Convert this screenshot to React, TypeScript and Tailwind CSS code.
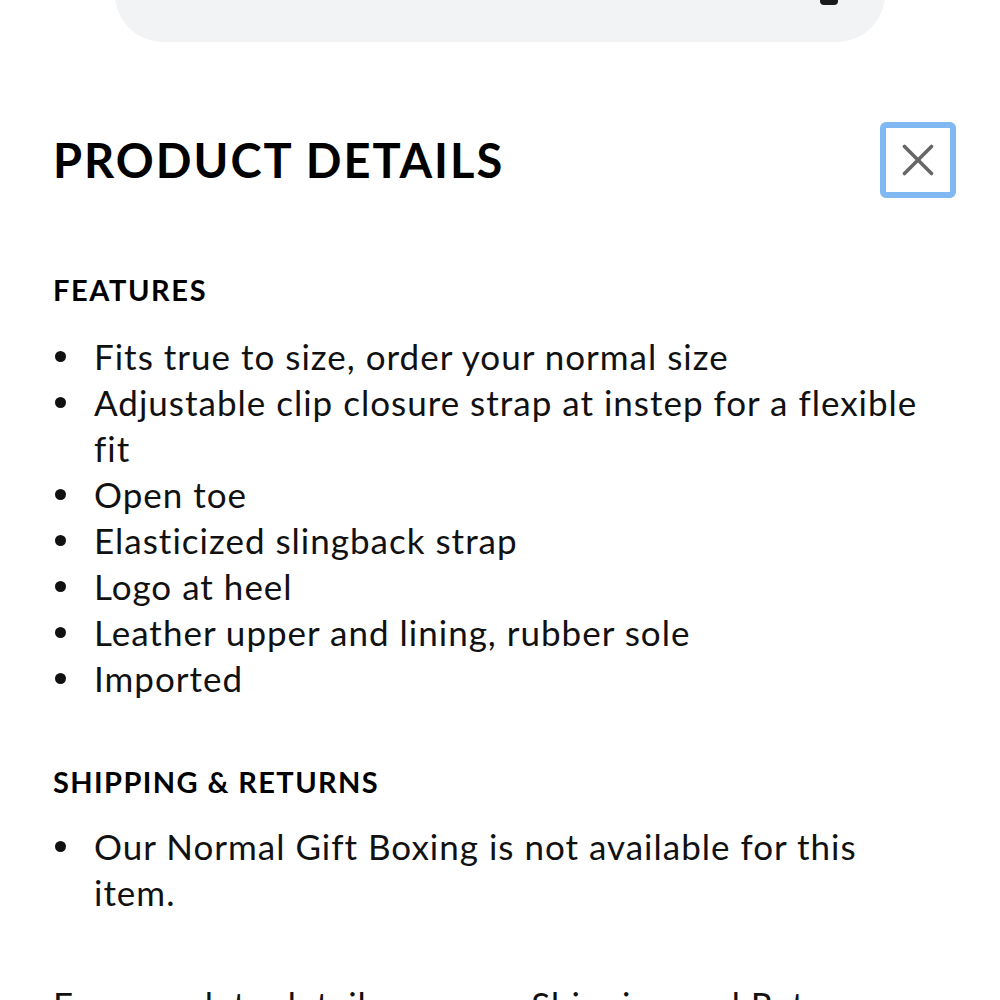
import { X } from "lucide-react";

const features = [
  "Fits true to size, order your normal size",
  "Adjustable clip closure strap at instep for a flexible fit",
  "Open toe",
  "Elasticized slingback strap",
  "Logo at heel",
  "Leather upper and lining, rubber sole",
  "Imported",
];

function BulletList({ items }: { items: string[] }) {
  return (
    <ul className="pl-[55px] w-[930px]">
      {items.map((item) => (
        <li key={item} className="flex text-[35px] leading-[46px] tracking-[1px] text-[#111]">
          <span className="w-[39px] h-[46px] shrink-0 flex items-center">
            <span className="w-[11px] h-[11px] rounded-full bg-[#111]" />
          </span>
          <span>{item}</span>
        </li>
      ))}
    </ul>
  );
}

export default function App() {
  return (
    <div className="w-[1000px] h-[1000px] overflow-hidden bg-white font-['Lato',sans-serif]">
      {/* top search panel, mostly scrolled off */}
      <div className="relative mx-[115px] h-[42px] -mt-[60px] pt-[60px] box-content rounded-b-[48px] bg-[#f2f3f5]">
        <div className="absolute right-[47px] top-[40px] w-[18px] h-[25px] rounded-[4px] bg-[#1a1a1a]" />
      </div>

      <div className="flex items-center justify-between pl-[53px] pr-[44px] mt-[80px]">
        <h1 className="text-[47px] font-bold tracking-[2px] text-black leading-none">PRODUCT DETAILS</h1>
        <button className="w-[76px] h-[76px] flex items-center justify-center border-[6px] border-[#80b8f3] rounded-[6px] text-[#666]">
          <X size={54} strokeWidth={1.6} />
        </button>
      </div>

      <div className="pl-[53px] mt-[77px]">
        <h2 className="text-[29px] font-bold tracking-[1.6px] text-black leading-none">FEATURES</h2>
      </div>
      <div className="mt-[29px]">
        <BulletList items={features} />
      </div>

      <div className="pl-[53px] mt-[66px]">
        <h2 className="text-[29px] font-bold tracking-[1.4px] text-black leading-none">SHIPPING &amp; RETURNS</h2>
      </div>
      <div className="mt-[27px]">
        <BulletList items={["Our Normal Gift Boxing is not available for this item."]} />
      </div>

      <p className="pl-[53px] mt-[66px] text-[35px] leading-[46px] tracking-[1px] text-[#111]">
        For complete details, see our Shipping and Returns
      </p>
    </div>
  );
}
